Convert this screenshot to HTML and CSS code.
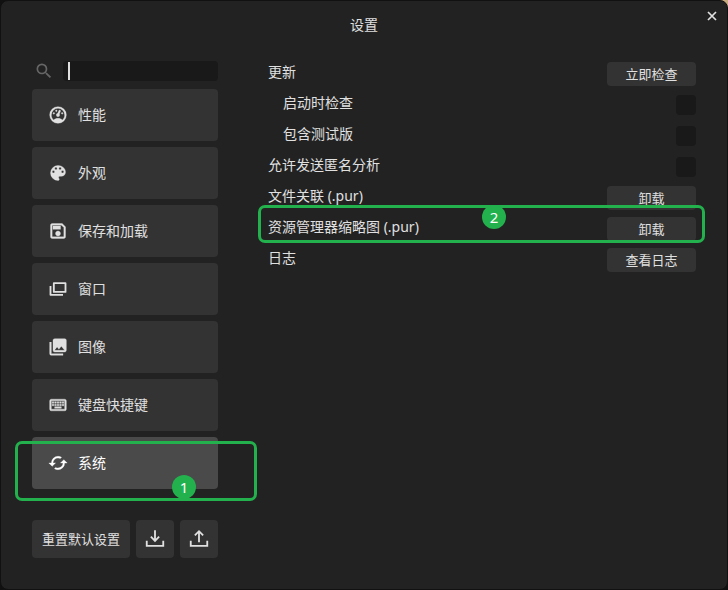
FILE: index.html
```html
<!DOCTYPE html>
<html lang="zh-CN">
<head>
  <meta charset="utf-8">
  <title>设置</title>
  <link rel="stylesheet" href="styles.css">
</head>
<body>
  <div class="window">
    <header class="titlebar">
      <h1>设置</h1>
      <button class="close" type="button" aria-label="关闭">
        <svg width="10" height="10" viewBox="0 0 10 10"><path d="M1 1L9 9M9 1L1 9" fill="none" stroke="currentColor" stroke-width="1.7"/></svg>
      </button>
    </header>

    <div class="layout">
      <aside class="sidebar">
        <div class="search">
          <label for="search" aria-label="搜索">
            <svg width="20" height="20" viewBox="0 0 24 24"><path d="M15.5 14h-.79l-.28-.27A6.47 6.47 0 0 0 16 9.5 6.5 6.5 0 1 0 9.5 16c1.61 0 3.09-.59 4.23-1.57l.27.28v.79l5 4.99L20.49 19l-4.99-5zm-6 0C7.01 14 5 11.99 5 9.5S7.01 5 9.5 5 14 7.01 14 9.5 11.99 14 9.5 14z"/></svg>
          </label>
          <div class="search-box">
            <input type="text" id="search">
            <span class="caret"></span>
          </div>
        </div>

        <ul class="nav">
          <li>
            <button type="button">
              <svg viewBox="0 0 24 24"><path fill-rule="evenodd" d="M17.3 18C19 16.5 20 14.4 20 12A8 8 0 0 0 12 4A8 8 0 0 0 4 12C4 14.4 5 16.5 6.7 18C8.2 16.7 10 16 12 16C14 16 15.9 16.7 17.3 18M12 2A10 10 0 0 1 22 12A10 10 0 0 1 12 22A10 10 0 0 1 2 12A10 10 0 0 1 12 2M7 9A1 1 0 0 1 8 10A1 1 0 0 1 7 11A1 1 0 0 1 6 10A1 1 0 0 1 7 9M10 6A1 1 0 0 1 11 7A1 1 0 0 1 10 8A1 1 0 0 1 9 7A1 1 0 0 1 10 6M17 9A1 1 0 0 1 18 10A1 1 0 0 1 17 11A1 1 0 0 1 16 10A1 1 0 0 1 17 9M14.4 6.1C14.9 6.3 15.2 6.9 15 7.4L13.6 10.8C13.8 11.1 14 11.5 14 12A2 2 0 0 1 12 14A2 2 0 0 1 10 12C10 10.9 10.7 10.1 11.7 10L13.1 6.7C13.3 6.1 13.9 5.9 14.4 6.1"/></svg>
              性能
            </button>
          </li>
          <li>
            <button type="button">
              <svg viewBox="0 0 24 24"><path d="M12 3a9 9 0 0 0 0 18c.83 0 1.5-.67 1.5-1.5 0-.39-.15-.74-.39-1.01-.23-.26-.38-.61-.38-.99 0-.83.67-1.5 1.5-1.5H16c2.76 0 5-2.24 5-5 0-4.42-4.03-8-9-8zm-5.5 9a1.5 1.5 0 1 1 0-3 1.5 1.5 0 0 1 0 3zm3-4a1.5 1.5 0 1 1 0-3 1.5 1.5 0 0 1 0 3zm5 0a1.5 1.5 0 1 1 0-3 1.5 1.5 0 0 1 0 3zm3 4a1.5 1.5 0 1 1 0-3 1.5 1.5 0 0 1 0 3z"/></svg>
              外观
            </button>
          </li>
          <li>
            <button type="button">
              <svg viewBox="0 0 24 24"><path d="M17 3H5C3.89 3 3 3.9 3 5V19C3 20.1 3.89 21 5 21H19C20.1 21 21 20.1 21 19V7L17 3M19 19H5V5H16.17L19 7.83V19M12 12C10.34 12 9 13.34 9 15S10.34 18 12 18 15 16.66 15 15 13.66 12 12 12M6 6H15V10H6V6Z"/></svg>
              保存和加载
            </button>
          </li>
          <li>
            <button type="button">
              <svg viewBox="0 0 24 24"><path d="M7 5H21V15.5H7ZM3 8.5V19H18" fill="none" stroke-width="2.2" stroke-linejoin="round"/></svg>
              窗口
            </button>
          </li>
          <li>
            <button type="button">
              <svg viewBox="0 0 24 24"><path d="M22 16V4A2 2 0 0 0 20 2H8A2 2 0 0 0 6 4V16A2 2 0 0 0 8 18H20A2 2 0 0 0 22 16M11 12L13.03 14.71L16 11L20 16H8M2 6V20A2 2 0 0 0 4 22H18V20H4V6"/></svg>
              图像
            </button>
          </li>
          <li>
            <button type="button">
              <svg viewBox="0 0 24 24"><path d="M4 5H20A2 2 0 0 1 22 7V17A2 2 0 0 1 20 19H4A2 2 0 0 1 2 17V7A2 2 0 0 1 4 5M4 7V17H20V7H4M5 8H7V10H5V8M8 8H10V10H8V8M11 8H13V10H11V8M14 8H16V10H14V8M17 8H19V10H17V8M5 11H7V13H5V11M8 11H10V13H8V11M11 11H13V13H11V11M14 11H16V13H14V11M17 11H19V13H17V11M8 14H16V16H8V14" fill-rule="evenodd"/></svg>
              键盘快捷键
            </button>
          </li>
          <li class="marked">
            <button class="active" type="button">
              <svg viewBox="0 0 24 24"><path d="M19 8L15 12H18A6 6 0 0 1 12 18C11 18 10.03 17.75 9.2 17.3L7.74 18.76C8.97 19.54 10.43 20 12 20A8 8 0 0 0 20 12H23L19 8M6 12A6 6 0 0 1 12 6C13 6 13.97 6.25 14.8 6.7L16.26 5.24C15.03 4.46 13.57 4 12 4A8 8 0 0 0 4 12H1L5 16L9 12H6"/></svg>
              系统
            </button>
            <span class="ring ring-nav"></span>
            <span class="badge badge-nav">1</span>
          </li>
        </ul>

        <div class="actions">
          <button class="reset" type="button">重置默认设置</button>
          <button type="button" aria-label="导入">
            <svg viewBox="0 0 24 24"><path d="M12 2.5V14M7.5 9.5L12 14L16.5 9.5M3 14V19.5H21V14"/></svg>
          </button>
          <button type="button" aria-label="导出">
            <svg viewBox="0 0 24 24"><path d="M12 15.5V4M7.5 8L12 3.5L16.5 8M3 14V19.5H21V14"/></svg>
          </button>
        </div>
      </aside>

      <main class="settings">
        <div class="row">
          <span class="name">更新</span>
          <button type="button">立即检查</button>
        </div>
        <div class="row sub">
          <label class="name" for="on-start">启动时检查</label>
          <input type="checkbox" id="on-start">
        </div>
        <div class="row sub">
          <label class="name" for="beta">包含测试版</label>
          <input type="checkbox" id="beta">
        </div>
        <div class="row">
          <label class="name" for="analytics">允许发送匿名分析</label>
          <input type="checkbox" id="analytics">
        </div>
        <div class="row">
          <span class="name">文件关联 (.pur)</span>
          <button type="button">卸载</button>
        </div>
        <div class="row marked">
          <span class="name">资源管理器缩略图 (.pur)</span>
          <button type="button">卸载</button>
          <span class="ring ring-row"></span>
          <span class="badge badge-row">2</span>
        </div>
        <div class="row">
          <span class="name">日志</span>
          <button type="button">查看日志</button>
        </div>
      </main>
    </div>
  </div>
</body>
</html>
```
FILE: styles.css
```css
* { box-sizing: border-box; }

body {
  margin: 0;
  background: linear-gradient(to right, #111 50%, #c9ab80 50%) top / 100% 20px no-repeat #111;
  color: #e0e0e0;
  font: 14px/20px "Noto Sans", "Noto Sans CJK SC", sans-serif;
}

button, input { font: inherit; color: inherit; border: none; margin: 0; }

button {
  padding: 0;
  border-radius: 4px;
  background: #333;
  cursor: pointer;
}

svg { display: block; fill: currentColor; }

.window {
  min-height: 100vh;
  background: #222;
  border: 1px solid #111;
  border-radius: 8px;
}

.titlebar { position: relative; padding: 14px 0 26px; }
.titlebar h1 { margin: 0; font-size: 14px; font-weight: 400; text-align: center; }

.close {
  position: absolute;
  top: 5px;
  right: 5px;
  padding: 5px;
  background: none;
}

.layout {
  display: grid;
  grid-template-columns: 186px 1fr;
  gap: 50px;
  padding: 0 31px 31px;
}

/* sidebar */
.search { display: flex; align-items: center; gap: 9px; }
.search label { margin-left: 2px; color: #666; }
.search-box { position: relative; flex: 1; display: flex; }
.search input {
  width: 100%;
  height: 20px;
  padding: 0 6px;
  background: #191919;
  border-radius: 4px;
  outline: none;
}
.caret {
  position: absolute;
  top: 1px;
  left: 5px;
  width: 2px;
  height: 18px;
  background: #e0e0e0;
}

.nav {
  display: grid;
  gap: 6px;
  margin: 8px 0 31px;
  padding: 0;
  list-style: none;
}
.nav button {
  display: flex;
  align-items: center;
  gap: 10px;
  width: 100%;
  height: 52px;
  padding: 0 16px;
}
.nav svg {
  width: 20px;
  height: 20px;
  stroke: currentColor;
  stroke-width: 0.4;
}
.nav .active { background: #4a4a4a; color: #fff; }

.actions { display: flex; gap: 6px; }
.actions button {
  display: grid;
  place-items: center;
  width: 38px;
  height: 38px;
}
.actions .reset { flex: 1; font-size: 13px; }
.actions svg {
  width: 22px;
  height: 22px;
  fill: none;
  stroke: currentColor;
  stroke-width: 2;
}

/* settings list */
.settings {
  display: flex;
  flex-direction: column;
  gap: 7px;
  padding-top: 1px;
}
.row {
  display: flex;
  justify-content: space-between;
  align-items: center;
  height: 24px;
}
.row .name { padding-bottom: 4px; }
.sub .name { padding-left: 15px; }
.row button { width: 89px; height: 24px; font-size: 13px; }
.row input {
  appearance: none;
  width: 20px;
  height: 20px;
  background: #191919;
  border-radius: 4px;
}

/* numbered callouts */
.marked { position: relative; }
.ring {
  position: absolute;
  border: 3px solid #22b14c;
  border-radius: 7px;
  pointer-events: none;
}
.ring-nav { top: 4px; right: -39px; bottom: -12px; left: -17px; }
.ring-row { top: -12px; right: -9px; bottom: -2px; left: -10px; }
.badge {
  position: absolute;
  width: 24px;
  height: 24px;
  border-radius: 50%;
  background: #22b14c;
  color: #fff;
  font-size: 15px;
  line-height: 24px;
  text-align: center;
}
.badge-nav { right: 22px; bottom: -10px; }
.badge-row { top: -12px; right: 190px; }
```
